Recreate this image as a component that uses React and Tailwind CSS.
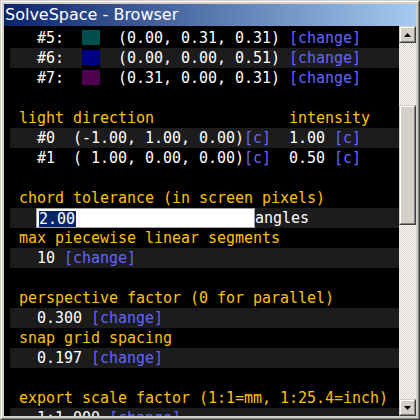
import React from "react";

const mono = "font-['DejaVu_Sans_Mono',monospace] text-[15px] tracking-[-0.03px] leading-[20px] whitespace-pre";

function Row({ hl, children }) {
  return (
    <div className={hl ? "h-[20px] shrink-0 flex bg-[#1c1c1c] text-white" : "h-[20px] shrink-0 flex text-white"}>
      {children}
    </div>
  );
}

function L({ children }) {
  return <span className="text-[#6464ff]">{children}</span>;
}

function H({ children }) {
  return <span className="text-[#ffc000]">{children}</span>;
}

function Swatch({ color }) {
  return (
    <div className="w-[18px] h-[20px] bg-black shrink-0">
      <div className="mt-[2px] h-[15px] w-[18px]" style={{ backgroundColor: color }} />
    </div>
  );
}

function Btn({ up }) {
  return (
    <div className="h-[17px] w-[17px] shrink-0 border border-t-[#d4d0c8] border-l-[#d4d0c8] border-r-[#404040] border-b-[#404040]">
      <div className="h-full w-full border border-t-white border-l-white border-r-[#808080] border-b-[#808080] bg-[#d4d0c8] flex items-center justify-center">
        <svg width="7" height="4" viewBox="0 0 7 4">
          {up ? <polygon points="3.5,0 7,4 0,4" fill="#000" /> : <polygon points="0,0 7,0 3.5,4" fill="#000" />}
        </svg>
      </div>
    </div>
  );
}

export default function App() {
  return (
    <div className="w-[420px] h-[420px] flex border border-t-[#d4d0c8] border-l-[#d4d0c8] border-r-[#404040] border-b-[#404040] overflow-hidden">
      <div className="flex-1 flex flex-col border border-t-white border-l-white border-r-[#808080] border-b-[#808080] bg-[#d4d0c8] p-[2px] min-w-0">
        <div className="h-[22px] shrink-0 bg-[linear-gradient(to_right,#0a246a,#a6caf0)] text-white font-['DejaVu_Sans',sans-serif] text-[16px] leading-[22px] pl-[1px] whitespace-pre">
          SolveSpace - Browser
        </div>
        <div className="flex flex-1 min-h-0">
          <div className={"flex-1 min-w-0 bg-black overflow-hidden pl-[6px] pt-[2px] flex flex-col " + mono}>
            <Row>
              <span>{"   #5:  "}</span>
              <Swatch color="#004f4f" />
              <span>{"  (0.00, 0.31, 0.31) "}</span>
              <L>[change]</L>
            </Row>
            <Row hl>
              <span>{"   #6:  "}</span>
              <Swatch color="#000082" />
              <span>{"  (0.00, 0.00, 0.51) "}</span>
              <L>[change]</L>
            </Row>
            <Row>
              <span>{"   #7:  "}</span>
              <Swatch color="#4f004f" />
              <span>{"  (0.31, 0.00, 0.31) "}</span>
              <L>[change]</L>
            </Row>
            <Row />
            <Row>
              <H>{" light direction               intensity"}</H>
            </Row>
            <Row hl>
              <span>{"   #0  (-1.00, 1.00, 0.00)"}</span>
              <L>[c]</L>
              <span>{"  1.00 "}</span>
              <L>[c]</L>
            </Row>
            <Row>
              <span>{"   #1  ( 1.00, 0.00, 0.00)"}</span>
              <L>[c]</L>
              <span>{"  0.50 "}</span>
              <L>[c]</L>
            </Row>
            <Row />
            <Row>
              <H>{" chord tolerance (in screen pixels)"}</H>
            </Row>
            <Row hl>
              <div className="w-[26px] shrink-0" />
              <div className="w-[219px] h-[20px] shrink-0 border border-[#a0a0a0] bg-white pl-[2px]">
                <span className="inline-block h-[16px] leading-[16px] mt-[1px] bg-[#0a246a] text-white pr-[1px]">2.00</span>
              </div>
              <span>angles</span>
            </Row>
            <Row>
              <H>{" max piecewise linear segments"}</H>
            </Row>
            <Row hl>
              <span>{"   10 "}</span>
              <L>[change]</L>
            </Row>
            <Row />
            <Row>
              <H>{" perspective factor (0 for parallel)"}</H>
            </Row>
            <Row hl>
              <span>{"   0.300 "}</span>
              <L>[change]</L>
            </Row>
            <Row>
              <H>{" snap grid spacing"}</H>
            </Row>
            <Row hl>
              <span>{"   0.197 "}</span>
              <L>[change]</L>
            </Row>
            <Row />
            <Row>
              <H>{" export scale factor (1:1=mm, 1:25.4=inch)"}</H>
            </Row>
            <Row hl>
              <span>{"   1:1.000 "}</span>
              <L>[change]</L>
            </Row>
          </div>
          <div className="w-[17px] shrink-0 flex flex-col">
            <Btn up />
            <div className="flex-1 min-h-0 bg-[image:repeating-conic-gradient(#ffffff_0%_25%,#d4d0c8_0%_50%)] bg-[length:2px_2px]">
              <div className="mt-[62px] h-[120px] w-[17px] border border-t-[#d4d0c8] border-l-[#d4d0c8] border-r-[#404040] border-b-[#404040]">
                <div className="h-full w-full border border-t-white border-l-white border-r-[#808080] border-b-[#808080] bg-[#d4d0c8]" />
              </div>
            </div>
            <Btn />
          </div>
        </div>
      </div>
    </div>
  );
}
